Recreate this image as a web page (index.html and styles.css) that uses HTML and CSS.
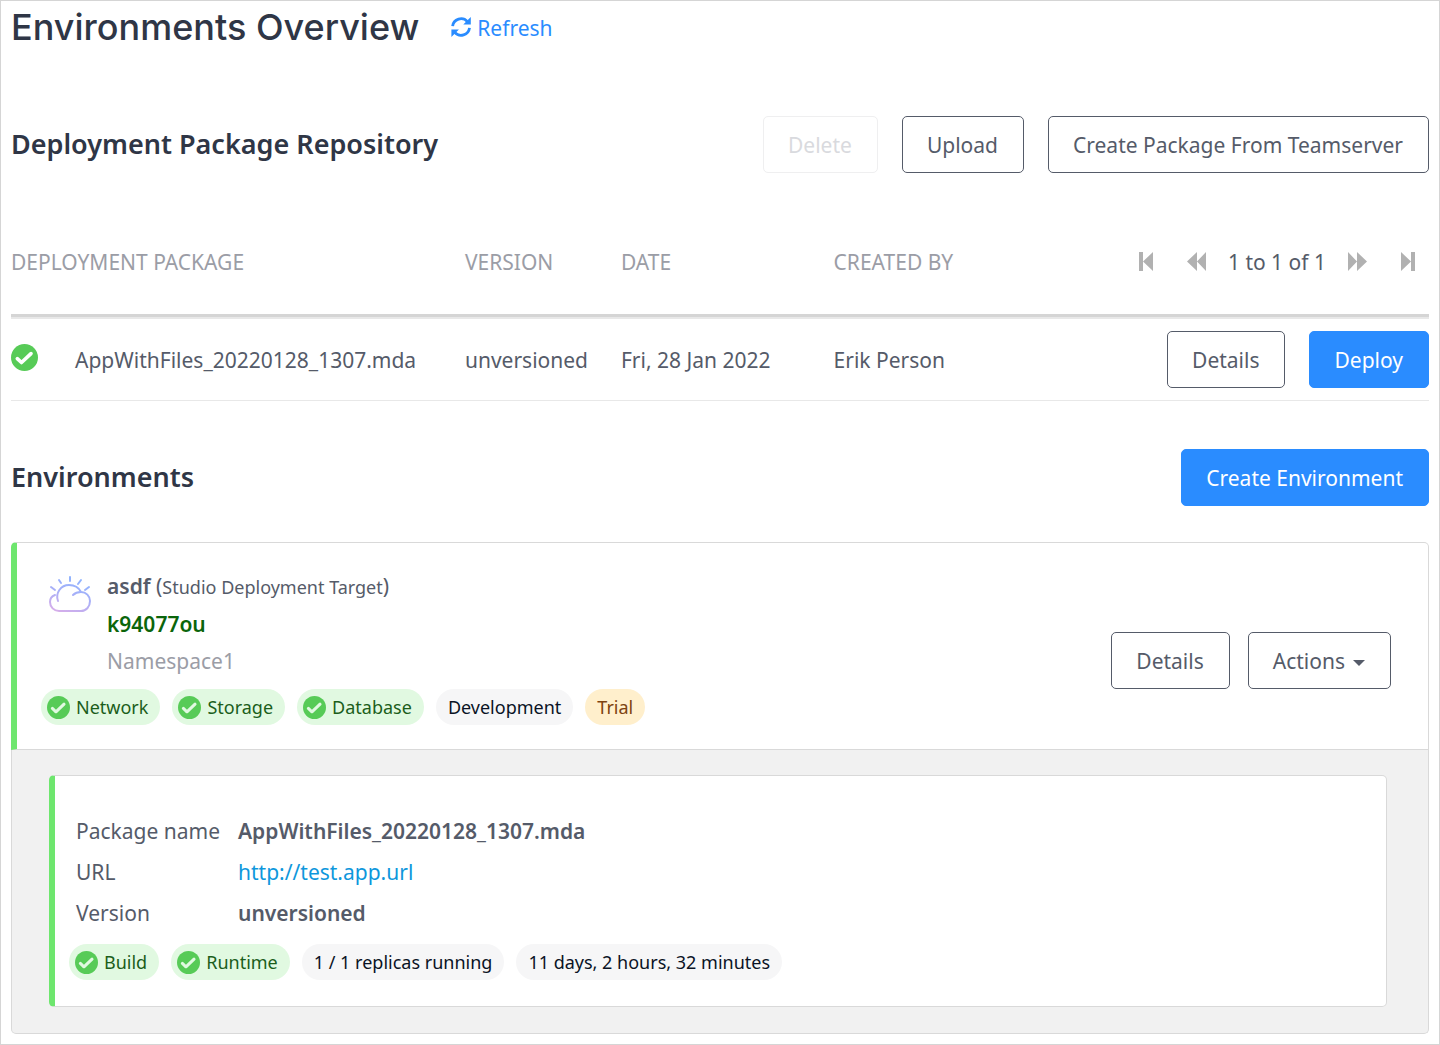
FILE: index.html
```html
<!DOCTYPE html>
<html lang="en">
<head>
<meta charset="utf-8">
<meta name="viewport" content="width=device-width, initial-scale=1">
<title>Environments Overview</title>
<link rel="stylesheet" href="styles.css">
</head>
<body>
<svg class="sprite" aria-hidden="true">
  <symbol id="check" viewBox="0 0 27 27">
    <circle cx="13.500" cy="13.500" r="13.500" fill="#57cb57"/>
    <path d="M6.300 14.600l4.200 3.900L20 9.600" fill="none" stroke="currentColor" stroke-width="3.600" stroke-linecap="round" stroke-linejoin="round"/>
  </symbol>
</svg>
<main class="page">
  <header class="page-header">
    <h1 class="page-title">Environments Overview</h1>
    <a class="refresh" href="#">
      <svg class="refresh-icon" viewBox="0 0 20 20" aria-hidden="true"><path d="M1.600 9.200A8.500 8.500 0 0 1 16.400 4.600M18.500 10.800A8.500 8.500 0 0 1 3.700 15.400" fill="none" stroke="currentColor" stroke-width="2.800"/><path d="M19.800 0v7.500h-7.500zM.4 20v-7.500h7.500z" fill="currentColor"/></svg>
      Refresh
    </a>
  </header>

  <section>
    <div class="section-head">
      <h2 class="section-title">Deployment Package Repository</h2>
      <div class="button-row">
        <button class="btn" type="button" disabled>Delete</button>
        <button class="btn" type="button">Upload</button>
        <button class="btn" type="button">Create Package From Teamserver</button>
      </div>
    </div>
    <table class="packages">
      <colgroup>
        <col class="col-status"><col class="col-package"><col class="col-version"><col class="col-date"><col class="col-author"><col>
      </colgroup>
      <thead>
        <tr>
          <th colspan="2" scope="col">DEPLOYMENT PACKAGE</th>
          <th scope="col">VERSION</th>
          <th scope="col">DATE</th>
          <th scope="col">CREATED BY</th>
          <td>
            <div class="pager">
              <button class="pager-btn" type="button" aria-label="First page"><svg width="20" height="20" viewBox="0 0 20 20"><path d="M3 0h4v19H3zM17 0v19L7 9.500z"/></svg></button>
              <button class="pager-btn" type="button" aria-label="Previous page"><svg width="20" height="20" viewBox="0 0 20 20"><path d="M10 0v19L0 9.500zM19 0v19l-9-9.500z"/></svg></button>
              <span class="pager-text">1 to 1 of 1</span>
              <button class="pager-btn" type="button" aria-label="Next page"><svg width="20" height="20" viewBox="0 0 20 20"><path d="M1 0v19l9-9.500zM10 0v19l10-9.500z"/></svg></button>
              <button class="pager-btn" type="button" aria-label="Last page"><svg width="20" height="20" viewBox="0 0 20 20"><path d="M13 0h4v19h-4zM3 0v19l10-9.500z"/></svg></button>
            </div>
          </td>
        </tr>
      </thead>
      <tbody>
        <tr>
          <td><svg class="status-icon" role="img" aria-label="Ready"><use href="#check"/></svg></td>
          <td>AppWithFiles_20220128_1307.mda</td>
          <td>unversioned</td>
          <td>Fri, 28 Jan 2022</td>
          <td>Erik Person</td>
          <td>
            <div class="button-row">
              <button class="btn" type="button">Details</button>
              <button class="btn btn-primary" type="button">Deploy</button>
            </div>
          </td>
        </tr>
      </tbody>
    </table>
  </section>

  <section>
    <div class="section-head section-head-environments">
      <h2 class="section-title">Environments</h2>
      <button class="btn btn-primary" type="button">Create Environment</button>
    </div>

    <article class="environment">
      <div class="environment-head">
        <div class="environment-info">
          <div class="environment-id">
            <svg class="cloud" width="42" height="40" viewBox="0 0 42 40" fill="none" stroke="url(#sky)" stroke-width="2" stroke-linecap="round" aria-hidden="true">
              <defs><linearGradient id="sky" gradientUnits="userSpaceOnUse" x1="26" y1="2" x2="14" y2="38"><stop offset="0" stop-color="#8fb4ff"/><stop offset=".5" stop-color="#a9aff7"/><stop offset="1" stop-color="#d5aeea"/></linearGradient></defs>
              <path d="M9 26C6 18 12 10 20 10c6 0 10 3 12 7M6 20c-3 1-5 4-5 7 0 5 4 9 9 9h22c5 0 9-4 9-10 0-5-4-9-9-9-3 0-6 1-8 3"/>
              <path d="M21 2v4M10 5l2 3M32 5l-3 4M2 12l4 3M40 12l-4 3"/>
            </svg>
            <div class="environment-names">
              <div><strong>asdf</strong> (<span class="small">Studio Deployment Target</span>)</div>
              <div><strong class="namespace-id">k94077ou</strong></div>
              <div class="muted">Namespace1</div>
            </div>
          </div>
          <ul class="tags">
            <li class="tag tag-ok"><svg><use href="#check"/></svg>Network</li>
            <li class="tag tag-ok"><svg><use href="#check"/></svg>Storage</li>
            <li class="tag tag-ok"><svg><use href="#check"/></svg>Database</li>
            <li class="tag">Development</li>
            <li class="tag tag-trial">Trial</li>
          </ul>
        </div>
        <div class="environment-actions">
          <button class="btn" type="button">Details</button>
          <button class="btn" type="button" aria-haspopup="true">Actions<span class="caret"></span></button>
        </div>
      </div>
      <div class="environment-body">
        <div class="app">
          <dl class="app-facts">
            <dt>Package name</dt><dd>AppWithFiles_20220128_1307.mda</dd>
            <dt>URL</dt><dd><a class="app-link" href="#">http://test.app.url</a></dd>
            <dt>Version</dt><dd>unversioned</dd>
          </dl>
          <ul class="tags">
            <li class="tag tag-ok"><svg><use href="#check"/></svg>Build</li>
            <li class="tag tag-ok"><svg><use href="#check"/></svg>Runtime</li>
            <li class="tag">1 / 1 replicas running</li>
            <li class="tag">11 days, 2 hours, 32 minutes</li>
          </ul>
        </div>
      </div>
    </article>
  </section>
</main>
</body>
</html>
```
FILE: styles.css
```css
* {
  box-sizing: border-box;
}

body {
  margin: 0;
  background: #fff;
  color: #555b69;
  font: 21px/30px "Noto Sans", sans-serif;
}

h1, h2, dl, dd, ul {
  margin: 0;
  padding: 0;
}

strong {
  font-weight: 600;
}

.sprite {
  display: none;
}

.page {
  min-height: 100vh;
  padding: 0 10px 10px;
  border: 1px solid #d5d5d5;
}

/* Headings */
.page-header {
  display: flex;
  align-items: center;
  gap: 32px;
  height: 54px;
}

.page-title {
  padding-bottom: 2px;
  color: #2f3646;
  font: 500 36px/48px Inter, sans-serif;
}

.refresh {
  display: flex;
  align-items: center;
  gap: 6px;
  color: #2a8cff;
  text-decoration: none;
}

.refresh-icon {
  width: 20px;
  height: 20px;
  margin-bottom: 3px;
}

.section-head {
  display: flex;
  align-items: center;
  justify-content: space-between;
  padding-top: 61px;
}

.section-head-environments {
  padding: 48px 0 36px;
}

.section-title {
  padding-bottom: 1px;
  color: #2f3646;
  font-size: 27px;
  font-weight: 600;
  line-height: 36px;
}

/* Buttons */
.button-row {
  display: flex;
  justify-content: flex-end;
  gap: 24px;
}

.btn {
  height: 57px;
  padding: 0 25px 0 24px;
  border: 1px solid #555b69;
  border-radius: 5px;
  background: #fff;
  color: #555b69;
  font: inherit;
  white-space: nowrap;
}

.btn:disabled {
  border-color: #efeff0;
  color: #d9dade;
}

.btn-primary {
  border-color: #2a8cff;
  background: #2a8cff;
  color: #fff;
}

.caret {
  display: inline-block;
  margin-left: 8px;
  border: 6px solid transparent;
  border-top-color: currentColor;
  border-bottom: 0;
  vertical-align: 3px;
}

/* Package table */
.packages {
  width: 100%;
  margin-top: 36px;
  border-collapse: separate;
  border-spacing: 0;
  table-layout: fixed;
}

.col-status {
  width: 64px;
}

.col-package {
  width: 27.5%;
}

.col-version {
  width: 11%;
}

.col-date {
  width: 15%;
}

.col-author {
  width: 17%;
}

.packages th,
.packages td {
  padding: 0;
  text-align: left;
}

.packages thead th,
.packages thead td {
  height: 108px;
  border-bottom: 3px solid #d5d5d5;
}

.packages th {
  color: #9b9da6;
  font-weight: 400;
}

.packages tbody td {
  height: 84px;
  border-top: 2px solid #e8e8e8;
  border-bottom: 1px solid #e8e8e8;
}

.status-icon {
  display: block;
  width: 27px;
  height: 27px;
  margin-bottom: 4px;
  color: #fff;
}

.pager {
  display: flex;
  align-items: center;
  justify-content: flex-end;
  gap: 21px;
  padding-right: 11px;
}

.pager-btn {
  display: flex;
  padding: 0;
  border: 0;
  margin-left: 10px;
  background: none;
}

.pager-text + .pager-btn {
  margin: 0 10px 0 0;
}

.pager-btn:last-child {
  margin: 0;
}

.pager-btn svg {
  fill: #b1b1b1;
}

/* Environment card */
.environment-head {
  display: flex;
  justify-content: space-between;
  padding: 25px 37px 24px 24px;
  border: 1px solid #d9d9d9;
  border-left: 6px solid #6ee66e;
  border-radius: 5px 5px 0 0;
}

.environment-id {
  display: flex;
  gap: 16px;
  padding-left: 8px;
  margin-bottom: 9px;
}

.cloud {
  margin-top: 7px;
}

.environment-names {
  line-height: 37px;
}

.small {
  font-size: 18px;
}

.namespace-id {
  color: #0b650b;
}

.muted {
  color: #9b9da6;
}

.environment-actions {
  display: flex;
  align-items: center;
  gap: 18px;
  padding-top: 28px;
}

.environment-body {
  padding: 25px 41px 26px 37px;
  border: 1px solid #d9d9d9;
  border-top: 0;
  border-radius: 0 0 5px 5px;
  background: #f1f1f1;
}

.app {
  padding: 35px 14px 26px;
  border: 1px solid #d9d9d9;
  border-left: 6px solid #6ee66e;
  border-radius: 5px;
  background: #fff;
}

.app-facts {
  display: grid;
  grid-template-columns: 162px 1fr;
  padding-left: 7px;
  margin-bottom: 10px;
  line-height: 41px;
}

.app-facts dd {
  font-weight: 600;
}

.app-link {
  color: #0e97dc;
  font-weight: 400;
  text-decoration: none;
}

/* Status tags */
.tags {
  display: flex;
  flex-wrap: wrap;
  gap: 12px;
  list-style: none;
}

.tag {
  display: flex;
  align-items: center;
  gap: 6px;
  height: 36px;
  padding: 0 12px;
  border-radius: 18px;
  background: #f6f6f7;
  color: #0a1325;
  font-size: 18px;
}

.tag svg {
  width: 23px;
  height: 23px;
}

.tag-ok {
  padding-left: 6px;
  background: #e1f9e1;
  color: #1b5e1b;
}

.tag-ok svg {
  color: #e1f9e1;
}

.tag-trial {
  background: #ffefcc;
  color: #7d4310;
}
```
